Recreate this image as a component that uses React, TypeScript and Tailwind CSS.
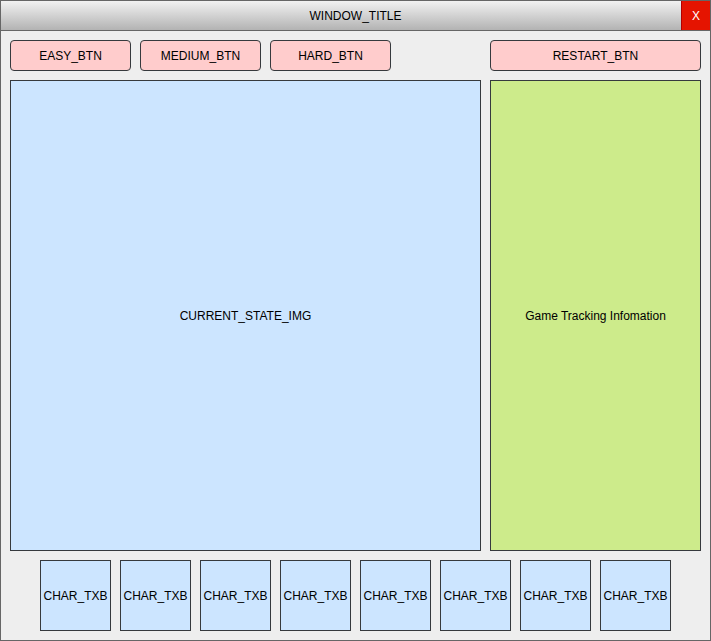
const font = { fontFamily: '"Liberation Sans", Arial, sans-serif' }

function Btn({ label, wide }: { label: string; wide?: boolean }) {
  return (
    <div
      className={`flex h-[31px] items-center justify-center rounded-[4px] border border-[#36393d] bg-[#ffcccc] text-[12px] text-black ${
        wide ? 'w-[211px]' : 'w-[121px]'
      }`}
    >
      {label}
    </div>
  )
}

export default function App() {
  const chars = Array.from({ length: 8 })
  return (
    <div
      style={font}
      className="flex h-[641px] w-[711px] flex-col border border-[#666666] bg-[#eeeeee] text-[12px] text-black"
    >
      {/* title bar */}
      <div className="relative flex h-[30px] shrink-0 items-center justify-center border-b border-[#666666] bg-gradient-to-b from-[#f2f2f2] to-[#b3b3b3]">
        <span>WINDOW_TITLE</span>
        <div className="absolute right-0 top-0 flex h-[29px] w-[29px] items-center justify-center border-l border-[#b20000] bg-[#e51400] text-white">
          X
        </div>
      </div>

      <div className="flex flex-1 flex-col gap-[9px] px-[9px] pb-[9px] pt-[9px]">
        {/* buttons */}
        <div className="flex gap-[9px]">
          <Btn label="EASY_BTN" />
          <Btn label="MEDIUM_BTN" />
          <Btn label="HARD_BTN" />
          <div className="ml-[90px]">
            <Btn label="RESTART_BTN" wide />
          </div>
        </div>

        {/* main */}
        <div className="flex gap-[9px]">
          <div className="flex h-[471px] w-[471px] items-center justify-center border border-[#36393d] bg-[#cce5ff]">
            CURRENT_STATE_IMG
          </div>
          <div className="flex h-[471px] w-[211px] items-center justify-center border border-[#36393d] bg-[#cdeb8b]">
            Game Tracking Infomation
          </div>
        </div>

        {/* char boxes */}
        <div className="flex justify-center gap-[9px]">
          {chars.map((_, i) => (
            <div
              key={i}
              className="flex h-[71px] w-[71px] items-center justify-center border border-[#36393d] bg-[#cce5ff]"
            >
              CHAR_TXB
            </div>
          ))}
        </div>
      </div>
    </div>
  )
}
